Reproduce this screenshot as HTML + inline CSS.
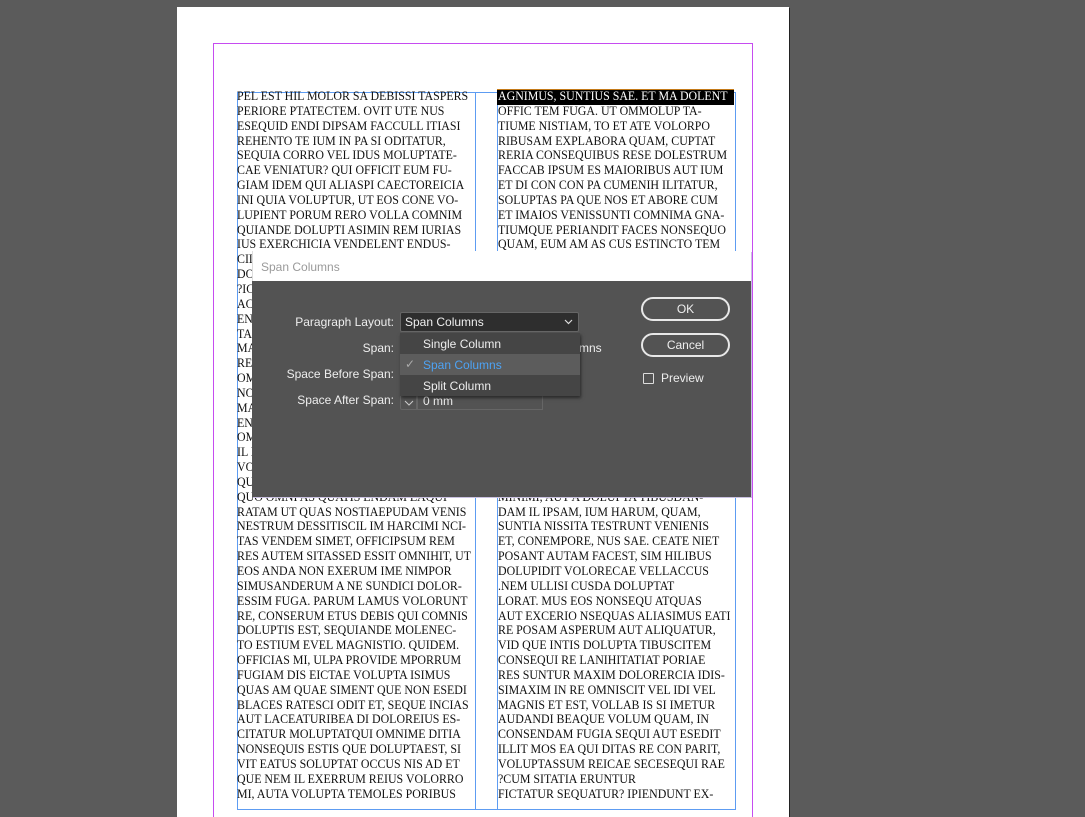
<!DOCTYPE html>
<html style="overflow:hidden;width:1085px;height:817px"><head><meta charset="utf-8"><style>
*{margin:0;padding:0;box-sizing:border-box}
body{width:1085px;height:817px;background:#5b5b5b;position:relative;overflow:hidden;font-family:"Liberation Sans",sans-serif}
.page{position:absolute;left:177px;top:7px;width:612px;height:810px;background:#fff;box-shadow:1px 1px 0 #222}
.abs{position:absolute}
.col{position:absolute;top:89px;font-family:"Liberation Serif",serif;font-size:12.6px;line-height:14.85px;color:#111;white-space:nowrap}
.col div{transform:scaleX(.945);transform-origin:left}
.dlg{position:absolute;left:252px;top:251px;width:499px;height:246px;background:#535353;box-shadow:1px 1px 0 #c9c0e0}
.lbl{position:absolute;color:#eee;font-size:12px;text-align:right;width:160px}
.btn{position:absolute;left:389px;width:89px;height:24px;border:2px solid #e8e8e8;border-radius:12px;color:#eee;font-size:12px;text-align:center;line-height:20px}
</style></head><body>
<div class="page"></div>
<div class="abs" style="left:213px;top:43px;width:540px;height:780px;border:1px solid #c64cf0"></div>
<div class="abs" style="left:237px;top:92px;width:499px;height:718px;border:1px solid #5d9cf2"></div>
<div class="abs" style="left:475px;top:92px;width:23px;height:718px;border-left:1px solid #5d9cf2;border-right:1px solid #5d9cf2"></div>
<div class="abs" style="left:497px;top:89px;width:237px;height:16px;background:#000;border-top:1px solid #c47a18"></div>
<div class="col" style="left:237px;width:238px;overflow:hidden">
<div>PEL EST HIL MOLOR SA DEBISSI TASPERS</div>
<div>PERIORE PTATECTEM. OVIT UTE NUS</div>
<div>ESEQUID ENDI DIPSAM FACCULL ITIASI</div>
<div>REHENTO TE IUM IN PA SI ODITATUR,</div>
<div>SEQUIA CORRO VEL IDUS MOLUPTATE-</div>
<div>CAE VENIATUR? QUI OFFICIT EUM FU-</div>
<div>GIAM IDEM QUI ALIASPI CAECTOREICIA</div>
<div>INI QUIA VOLUPTUR, UT EOS CONE VO-</div>
<div>LUPIENT PORUM RERO VOLLA COMNIM</div>
<div>QUIANDE DOLUPTI ASIMIN REM IURIAS</div>
<div>IUS EXERCHICIA VENDELENT ENDUS-</div>
<div>CIL</div><div>DOL</div><div>?IC</div><div>ACI</div><div>ENI</div><div>TAS</div><div>MAI</div><div>REM</div><div>OMN</div><div>NON</div><div>MAG</div><div>ENT</div><div>OMN</div><div>IL I</div><div>VOL</div><div>QUI</div>
<div>QUO OMNI AS QUATIS ENDAM EAQUI</div>
<div>RATAM UT QUAS NOSTIAEPUDAM VENIS</div>
<div>NESTRUM DESSITISCIL IM HARCIMI NCI-</div>
<div>TAS VENDEM SIMET, OFFICIPSUM REM</div>
<div>RES AUTEM SITASSED ESSIT OMNIHIT, UT</div>
<div>EOS ANDA NON EXERUM IME NIMPOR</div>
<div>SIMUSANDERUM A NE SUNDICI DOLOR-</div>
<div>ESSIM FUGA. PARUM LAMUS VOLORUNT</div>
<div>RE, CONSERUM ETUS DEBIS QUI COMNIS</div>
<div>DOLUPTIS EST, SEQUIANDE MOLENEC-</div>
<div>TO ESTIUM EVEL MAGNISTIO. QUIDEM.</div>
<div>OFFICIAS MI, ULPA PROVIDE MPORRUM</div>
<div>FUGIAM DIS EICTAE VOLUPTA ISIMUS</div>
<div>QUAS AM QUAE SIMENT QUE NON ESEDI</div>
<div>BLACES RATESCI ODIT ET, SEQUE INCIAS</div>
<div>AUT LACEATURIBEA DI DOLOREIUS ES-</div>
<div>CITATUR MOLUPTATQUI OMNIME DITIA</div>
<div>NONSEQUIS ESTIS QUE DOLUPTAEST, SI</div>
<div>VIT EATUS SOLUPTAT OCCUS NIS AD ET</div>
<div>QUE NEM IL EXERRUM REIUS VOLORRO</div>
<div>MI, AUTA VOLUPTA TEMOLES PORIBUS</div>
</div>
<div class="col" style="left:498px;width:237px;overflow:hidden">
<div style="color:#fff">AGNIMUS, SUNTIUS SAE. ET MA DOLENT</div>
<div>OFFIC TEM FUGA. UT OMMOLUP TA-</div>
<div>TIUME NISTIAM, TO ET ATE VOLORPO</div>
<div>RIBUSAM EXPLABORA QUAM, CUPTAT</div>
<div>RERIA CONSEQUIBUS RESE DOLESTRUM</div>
<div>FACCAB IPSUM ES MAIORIBUS AUT IUM</div>
<div>ET DI CON CON PA CUMENIH ILITATUR,</div>
<div>SOLUPTAS PA QUE NOS ET ABORE CUM</div>
<div>ET IMAIOS VENISSUNTI COMNIMA GNA-</div>
<div>TIUMQUE PERIANDIT FACES NONSEQUO</div>
<div>QUAM, EUM AM AS CUS ESTINCTO TEM</div>
<div>&nbsp;</div><div>&nbsp;</div><div>&nbsp;</div><div>&nbsp;</div><div>&nbsp;</div><div>&nbsp;</div><div>&nbsp;</div><div>&nbsp;</div><div>&nbsp;</div><div>&nbsp;</div><div>&nbsp;</div><div>&nbsp;</div><div>&nbsp;</div><div>&nbsp;</div><div>&nbsp;</div><div>&nbsp;</div>
<div>MINIMI, AUT A DOLUPTA TIBUSDAN-</div>
<div>DAM IL IPSAM, IUM HARUM, QUAM,</div>
<div>SUNTIA NISSITA TESTRUNT VENIENIS</div>
<div>ET, CONEMPORE, NUS SAE. CEATE NIET</div>
<div>POSANT AUTAM FACEST, SIM HILIBUS</div>
<div>DOLUPIDIT VOLORECAE VELLACCUS</div>
<div>.NEM ULLISI CUSDA DOLUPTAT</div>
<div>LORAT. MUS EOS NONSEQU ATQUAS</div>
<div>AUT EXCERIO NSEQUAS ALIASIMUS EATI</div>
<div>RE POSAM ASPERUM AUT ALIQUATUR,</div>
<div>VID QUE INTIS DOLUPTA TIBUSCITEM</div>
<div>CONSEQUI RE LANIHITATIAT PORIAE</div>
<div>RES SUNTUR MAXIM DOLORERCIA IDIS-</div>
<div>SIMAXIM IN RE OMNISCIT VEL IDI VEL</div>
<div>MAGNIS ET EST, VOLLAB IS SI IMETUR</div>
<div>AUDANDI BEAQUE VOLUM QUAM, IN</div>
<div>CONSENDAM FUGIA SEQUI AUT ESEDIT</div>
<div>ILLIT MOS EA QUI DITAS RE CON PARIT,</div>
<div>VOLUPTASSUM REICAE SECESEQUI RAE</div>
<div>?CUM SITATIA ERUNTUR</div>
<div>FICTATUR SEQUATUR? IPIENDUNT EX-</div>
</div>

<div class="dlg">
<div class="abs" style="left:0;top:0;width:499px;height:30px;background:#fff;color:#9a9a9a;font-size:12px;padding:9px 0 0 8px;border-left:1px solid #ddd">Span Columns</div>
<div class="lbl" style="left:-18px;top:64px">Paragraph Layout:</div>
<div class="lbl" style="left:-18px;top:90px">Span:</div>
<div class="lbl" style="left:-18px;top:116px">Space Before Span:</div>
<div class="lbl" style="left:-18px;top:142px">Space After Span:</div>
<div class="abs" style="left:327px;top:90px;color:#eee;font-size:12px">mns</div>
<div class="abs" style="left:148px;top:61px;width:179px;height:20px;background:#2e2e2e;border:1px solid #666;border-radius:2px;color:#eee;font-size:12px;padding:2px 0 0 4px">Span Columns
<svg class="abs" style="left:163px;top:6px" width="9" height="6"><path d="M1 1l3.5 3.5L8 1" stroke="#ddd" fill="none" stroke-width="1.2"/></svg></div>
<div class="abs" style="left:148px;top:141px;width:17px;height:18px;border:1px solid #666;border-radius:2px 0 0 2px"></div>
<div class="abs" style="left:165px;top:141px;width:126px;height:18px;border:1px solid #666;color:#eee;font-size:12px;padding:1px 0 0 5px">0 mm</div>
<svg class="abs" style="left:152px;top:148px" width="10" height="8"><path d="M1 2l4 4 4-4" stroke="#ccc" fill="none"/></svg>
<div class="abs" style="left:148px;top:82px;width:180px;height:63px;background:#454545;box-shadow:1px 2px 3px rgba(0,0,0,.5);font-size:12px;color:#eee">
<div style="position:absolute;left:23px;top:4px">Single Column</div>
<div style="position:absolute;left:0;top:21px;width:180px;height:21px;background:#5c5c5c"></div>
<div style="position:absolute;left:5px;top:24px;color:#aaa">✓</div>
<div style="position:absolute;left:23px;top:25px;color:#4da3f5">Span Columns</div>
<div style="position:absolute;left:23px;top:46px">Split Column</div>
</div>
<div class="btn" style="top:46px">OK</div>
<div class="btn" style="top:82px">Cancel</div>
<div class="abs" style="left:391px;top:122px;width:11px;height:11px;border:1px solid #ddd;border-radius:1px"></div>
<div class="abs" style="left:409px;top:120px;color:#eee;font-size:12px">Preview</div>
</div>
</body></html>
